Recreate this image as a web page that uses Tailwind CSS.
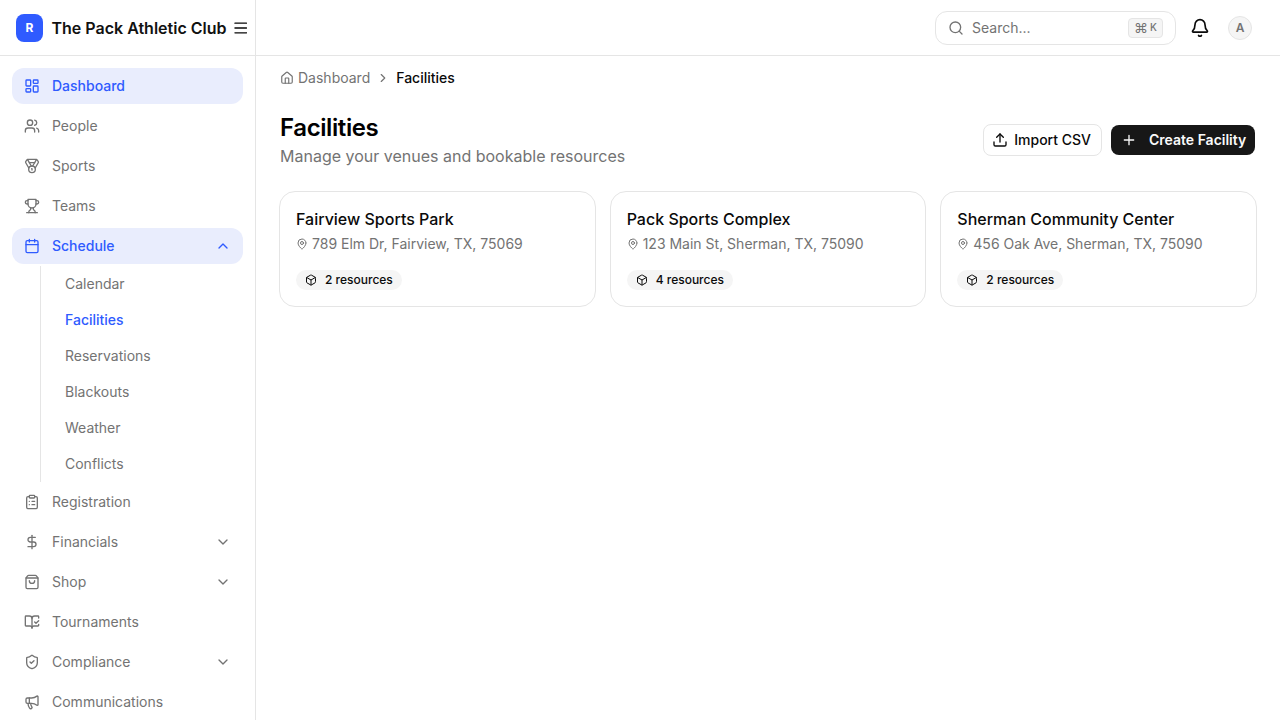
<!DOCTYPE html>
<html lang="en">
<head>
<meta charset="UTF-8">
<title>Facilities</title>
<script src="https://cdn.jsdelivr.net/npm/@tailwindcss/browser@4"></script>
</head>
<body class="h-screen overflow-hidden bg-white font-['Inter',sans-serif] text-[#0a0a0a] antialiased">
<div class="flex h-[720px] overflow-hidden">

  <!-- Sidebar -->
  <aside class="w-[256px] shrink-0 border-r border-[#e5e5e5] flex flex-col">
    <div class="h-[56px] shrink-0 border-b border-[#e5e5e5] flex items-center pl-4 pr-2">
      <div class="w-7 h-7 rounded-lg bg-[#2f5bff] text-white text-xs font-bold flex items-center justify-center">R</div>
      <span class="ml-[8.500px] text-base font-semibold leading-6 whitespace-nowrap text-[#111]">The Pack Athletic Club</span>
      <svg class="ml-[7px] w-[14px] h-[14px]" viewBox="0 0 14 14" fill="none" stroke="#0a0a0a" stroke-width="1.400" stroke-linecap="round"><path d="M1 2h12M1 7h12M1 12h12"/></svg>
    </div>
    <nav class="px-3 pt-3 flex flex-col gap-1 text-sm text-[#737373]">
      <a class="h-9 rounded-xl bg-[#e9edfd] text-[#2f5bff] font-medium flex items-center gap-3 px-3">
        <svg class="w-4 h-4" viewBox="0 0 24 24" fill="none" stroke="currentColor" stroke-width="2" stroke-linecap="round" stroke-linejoin="round"><rect x="3" y="3" width="7" height="9" rx="1"/><rect x="14" y="3" width="7" height="5" rx="1"/><rect x="14" y="12" width="7" height="9" rx="1"/><rect x="3" y="16" width="7" height="5" rx="1"/></svg>
        Dashboard
      </a>
      <a class="h-9 rounded-xl flex items-center gap-3 px-3">
        <svg class="w-4 h-4" viewBox="0 0 24 24" fill="none" stroke="currentColor" stroke-width="2" stroke-linecap="round" stroke-linejoin="round"><circle cx="9" cy="7" r="4"/><path d="M2 21v-2a4 4 0 0 1 4-4h6a4 4 0 0 1 4 4v2"/><path d="M16 3.100a4 4 0 0 1 0 7.800"/><path d="M22 21v-2a4 4 0 0 0-3-3.900"/></svg>
        People
      </a>
      <a class="h-9 rounded-xl flex items-center gap-3 px-3">
        <svg class="w-4 h-4" viewBox="0 0 24 24" fill="none" stroke="currentColor" stroke-width="2" stroke-linecap="round" stroke-linejoin="round"><path d="M7.210 15 2.660 7.140a2 2 0 0 1 .13-2.200L4.400 2.800A2 2 0 0 1 6 2h12a2 2 0 0 1 1.600.8l1.600 2.140a2 2 0 0 1 .14 2.200L16.790 15"/><path d="M11 12 5.120 2.200"/><path d="m13 12 5.880-9.800"/><path d="M8 7h8"/><circle cx="12" cy="17" r="5"/><path d="M12 18v-2h-.5"/></svg>
        Sports
      </a>
      <a class="h-9 rounded-xl flex items-center gap-3 px-3">
        <svg class="w-4 h-4" viewBox="0 0 24 24" fill="none" stroke="currentColor" stroke-width="2" stroke-linecap="round" stroke-linejoin="round"><path d="M6 9H4.500a2.500 2.500 0 0 1 0-5H6"/><path d="M18 9h1.500a2.500 2.500 0 0 0 0-5H18"/><path d="M4 22h16"/><path d="M10 14.700V17c0 .6-.5 1-1 1.200C7.900 18.800 7 20.200 7 22"/><path d="M14 14.700V17c0 .6.500 1 1 1.200 1.100.6 2 2 2 3.800"/><path d="M18 2H6v7a6 6 0 0 0 12 0V2Z"/></svg>
        Teams
      </a>
      <div>
        <a class="h-9 rounded-xl bg-[#e9edfd] text-[#2f5bff] font-medium flex items-center gap-3 px-3">
          <svg class="w-4 h-4" viewBox="0 0 24 24" fill="none" stroke="currentColor" stroke-width="2" stroke-linecap="round" stroke-linejoin="round"><path d="M8 2v4M16 2v4"/><rect x="3" y="4" width="18" height="18" rx="2"/><path d="M3 10h18"/></svg>
          Schedule
          <svg class="ml-auto w-4 h-4" viewBox="0 0 24 24" fill="none" stroke="currentColor" stroke-width="2" stroke-linecap="round" stroke-linejoin="round"><path d="m6 15 6-6 6 6"/></svg>
        </a>
        <div class="ml-7 mt-0.5 -mb-0.5 border-l border-[#e5e5e5] flex flex-col">
          <a class="h-9 flex items-center pl-6">Calendar</a>
          <a class="h-9 flex items-center pl-6 text-[#2f5bff] font-medium">Facilities</a>
          <a class="h-9 flex items-center pl-6">Reservations</a>
          <a class="h-9 flex items-center pl-6">Blackouts</a>
          <a class="h-9 flex items-center pl-6">Weather</a>
          <a class="h-9 flex items-center pl-6">Conflicts</a>
        </div>
      </div>
      <a class="h-9 rounded-xl flex items-center gap-3 px-3">
        <svg class="w-4 h-4" viewBox="0 0 24 24" fill="none" stroke="currentColor" stroke-width="2" stroke-linecap="round" stroke-linejoin="round"><rect x="8" y="2" width="8" height="4" rx="1"/><path d="M16 4h2a2 2 0 0 1 2 2v14a2 2 0 0 1-2 2H6a2 2 0 0 1-2-2V6a2 2 0 0 1 2-2h2"/><path d="M12 11h4M12 16h4M8 11h.01M8 16h.01"/></svg>
        Registration
      </a>
      <a class="h-9 rounded-xl flex items-center gap-3 px-3">
        <svg class="w-4 h-4" viewBox="0 0 24 24" fill="none" stroke="currentColor" stroke-width="2" stroke-linecap="round" stroke-linejoin="round"><path d="M12 2v20"/><path d="M17 5H9.500a3.500 3.500 0 0 0 0 7h5a3.500 3.500 0 0 1 0 7H6"/></svg>
        Financials
        <svg class="ml-auto w-4 h-4" viewBox="0 0 24 24" fill="none" stroke="currentColor" stroke-width="2" stroke-linecap="round" stroke-linejoin="round"><path d="m6 9 6 6 6-6"/></svg>
      </a>
      <a class="h-9 rounded-xl flex items-center gap-3 px-3">
        <svg class="w-4 h-4" viewBox="0 0 24 24" fill="none" stroke="currentColor" stroke-width="2" stroke-linecap="round" stroke-linejoin="round"><path d="M16 10a4 4 0 0 1-8 0"/><path d="M3.103 6.034h17.794"/><path d="M3.400 5.467a2 2 0 0 0-.4 1.200V20a2 2 0 0 0 2 2h14a2 2 0 0 0 2-2V6.667a2 2 0 0 0-.4-1.200l-2-2.667A2 2 0 0 0 17 2H7a2 2 0 0 0-1.600.8z"/></svg>
        Shop
        <svg class="ml-auto w-4 h-4" viewBox="0 0 24 24" fill="none" stroke="currentColor" stroke-width="2" stroke-linecap="round" stroke-linejoin="round"><path d="m6 9 6 6 6-6"/></svg>
      </a>
      <a class="h-9 rounded-xl flex items-center gap-3 px-3">
        <svg class="w-4 h-4" viewBox="0 0 24 24" fill="none" stroke="currentColor" stroke-width="2" stroke-linecap="round" stroke-linejoin="round"><path d="M12 21V7"/><path d="m16 12 2 2 4-4"/><path d="M22 6V4a1 1 0 0 0-1-1h-5a4 4 0 0 0-4 4 4 4 0 0 0-4-4H3a1 1 0 0 0-1 1v13a1 1 0 0 0 1 1h6a3 3 0 0 1 3 3 3 3 0 0 1 3-3h6a1 1 0 0 0 1-1v-1.300"/></svg>
        Tournaments
      </a>
      <a class="h-9 rounded-xl flex items-center gap-3 px-3">
        <svg class="w-4 h-4" viewBox="0 0 24 24" fill="none" stroke="currentColor" stroke-width="2" stroke-linecap="round" stroke-linejoin="round"><path d="M20 13c0 5-3.500 7.500-7.700 9a1 1 0 0 1-.6 0C7.500 20.500 4 18 4 13V6a1 1 0 0 1 1-1c2 0 4.500-1.200 6.200-2.700a1.200 1.200 0 0 1 1.600 0C14.500 3.800 17 5 19 5a1 1 0 0 1 1 1z"/><path d="m9 12 2 2 4-4"/></svg>
        Compliance
        <svg class="ml-auto w-4 h-4" viewBox="0 0 24 24" fill="none" stroke="currentColor" stroke-width="2" stroke-linecap="round" stroke-linejoin="round"><path d="m6 9 6 6 6-6"/></svg>
      </a>
      <a class="h-9 rounded-xl flex items-center gap-3 px-3">
        <svg class="w-4 h-4" viewBox="0 0 24 24" fill="none" stroke="currentColor" stroke-width="2" stroke-linecap="round" stroke-linejoin="round"><path d="M11 6a13 13 0 0 0 8.400-2.800A1 1 0 0 1 21 4v12a1 1 0 0 1-1.600.8A13 13 0 0 0 11 14H5a2 2 0 0 1-2-2V8a2 2 0 0 1 2-2z"/><path d="M6 14a12 12 0 0 0 2.400 7.200 2 2 0 0 0 3.200-2.400A8 8 0 0 1 10 14"/><path d="M8 6v8"/></svg>
        Communications
      </a>
    </nav>
  </aside>

  <!-- Main -->
  <div class="flex-1 min-w-0 flex flex-col">
    <header class="h-[56px] shrink-0 border-b border-[#e5e5e5] flex items-center justify-end pr-7">
      <div class="w-[241px] h-[34px] rounded-xl border border-[#e5e5e5] flex items-center pl-3 pr-3 text-sm text-[#737373]">
        <svg class="w-4 h-4 shrink-0" viewBox="0 0 24 24" fill="none" stroke="currentColor" stroke-width="2" stroke-linecap="round" stroke-linejoin="round"><circle cx="11" cy="11" r="8"/><path d="m21 21-4.300-4.300"/></svg>
        <span class="ml-2">Search...</span>
        <kbd class="ml-auto h-5 w-[35px] rounded bg-[#f5f5f5] border border-[#e5e5e5] flex items-center justify-center gap-[2px] text-[10px] font-medium font-['Inter',sans-serif]"><span class="text-sm font-normal leading-none">⌘</span>K</kbd>
      </div>
      <svg class="ml-[14px] w-5 h-5 text-[#0a0a0a]" viewBox="0 0 24 24" fill="none" stroke="currentColor" stroke-width="2" stroke-linecap="round" stroke-linejoin="round"><path d="M10.300 21a2 2 0 0 0 3.400 0"/><path d="M3.300 15.300A1 1 0 0 0 4 17h16a1 1 0 0 0 .7-1.700C19.400 14 18 12.500 18 8A6 6 0 0 0 6 8c0 4.500-1.400 6-2.700 7.300"/></svg>
      <div class="ml-[18px] w-6 h-6 rounded-full bg-[#f5f5f5] border border-[#e5e5e5] text-[#737373] text-xs font-semibold flex items-center justify-center">A</div>
    </header>

    <main class="flex-1 px-6">
      <div class="h-11 flex items-center text-sm text-[#737373]">
        <svg class="w-[14px] h-[14px] mr-1" viewBox="0 0 24 24" fill="none" stroke="currentColor" stroke-width="2" stroke-linecap="round" stroke-linejoin="round"><path d="M15 21v-8a1 1 0 0 0-1-1h-4a1 1 0 0 0-1 1v8"/><path d="M3 10a2 2 0 0 1 .7-1.500l7-6a2 2 0 0 1 2.600 0l7 6a2 2 0 0 1 .7 1.500v9a2 2 0 0 1-2 2H5a2 2 0 0 1-2-2z"/></svg>
        Dashboard
        <svg class="mx-[6px] w-[14px] h-[14px]" viewBox="0 0 24 24" fill="none" stroke="currentColor" stroke-width="2" stroke-linecap="round" stroke-linejoin="round"><path d="m9 18 6-6-6-6"/></svg>
        <span class="font-medium text-[#0a0a0a]">Facilities</span>
      </div>
      <div class="mt-[12px] flex items-center justify-between">
        <div>
          <h1 class="text-2xl leading-8 font-semibold tracking-[-0.4px] text-black">Facilities</h1>
          <p class="text-base leading-6 text-[#737373]">Manage your venues and bookable resources</p>
        </div>
        <div class="flex items-center gap-[9px] mr-px">
          <button class="h-8 pl-2 pr-[10px] rounded-lg border border-[#e5e5e5] flex items-center gap-[6px] text-sm font-medium">
            <svg class="w-4 h-4" viewBox="0 0 24 24" fill="none" stroke="currentColor" stroke-width="2" stroke-linecap="round" stroke-linejoin="round"><path d="M12 3v12"/><path d="m17 8-5-5-5 5"/><path d="M21 15v4a2 2 0 0 1-2 2H5a2 2 0 0 1-2-2v-4"/></svg>
            Import CSV
          </button>
          <button class="h-[30px] w-[144px] pl-[10px] rounded-lg bg-[#171717] text-[#fafafa] flex items-center gap-3 text-sm font-semibold">
            <svg class="w-4 h-4" viewBox="0 0 24 24" fill="none" stroke="currentColor" stroke-width="2" stroke-linecap="round" stroke-linejoin="round"><path d="M5 12h14M12 5v14"/></svg>
            Create Facility
          </button>
        </div>
      </div>
      <div class="mt-[23px] -mx-px grid grid-cols-3 gap-[14px]">
        <div class="h-[116px] rounded-2xl border border-[#e5e5e5] px-4 pt-[15px]">
          <h3 class="text-base leading-6 font-medium">Fairview Sports Park</h3>
          <p class="flex items-center gap-1 text-sm leading-5 text-[#737373] mt-[3px]">
            <svg class="w-3 h-3" viewBox="0 0 24 24" fill="none" stroke="currentColor" stroke-width="2" stroke-linecap="round" stroke-linejoin="round"><path d="M20 10c0 5-5.500 10.200-7.400 11.800a1 1 0 0 1-1.200 0C9.500 20.200 4 15 4 10a8 8 0 0 1 16 0"/><circle cx="12" cy="10" r="3"/></svg>
            789 Elm Dr, Fairview, TX, 75069
          </p>
          <span class="mt-4 inline-flex h-5 items-center gap-2 rounded-full bg-[#f5f5f5] pl-[9px] pr-[9px] text-xs font-medium">
            <svg class="w-3 h-3" viewBox="0 0 24 24" fill="none" stroke="currentColor" stroke-width="2" stroke-linecap="round" stroke-linejoin="round"><path d="M21 8a2 2 0 0 0-1-1.700l-7-4a2 2 0 0 0-2 0l-7 4A2 2 0 0 0 3 8v8a2 2 0 0 0 1 1.700l7 4a2 2 0 0 0 2 0l7-4a2 2 0 0 0 1-1.700Z"/><path d="m3.300 7 8.700 5 8.700-5M12 22V12"/></svg>
            2 resources
          </span>
        </div>
        <div class="h-[116px] rounded-2xl border border-[#e5e5e5] px-4 pt-[15px]">
          <h3 class="text-base leading-6 font-medium">Pack Sports Complex</h3>
          <p class="flex items-center gap-1 text-sm leading-5 text-[#737373] mt-[3px]">
            <svg class="w-3 h-3" viewBox="0 0 24 24" fill="none" stroke="currentColor" stroke-width="2" stroke-linecap="round" stroke-linejoin="round"><path d="M20 10c0 5-5.500 10.200-7.400 11.800a1 1 0 0 1-1.200 0C9.500 20.200 4 15 4 10a8 8 0 0 1 16 0"/><circle cx="12" cy="10" r="3"/></svg>
            123 Main St, Sherman, TX, 75090
          </p>
          <span class="mt-4 inline-flex h-5 items-center gap-2 rounded-full bg-[#f5f5f5] pl-[9px] pr-[9px] text-xs font-medium">
            <svg class="w-3 h-3" viewBox="0 0 24 24" fill="none" stroke="currentColor" stroke-width="2" stroke-linecap="round" stroke-linejoin="round"><path d="M21 8a2 2 0 0 0-1-1.700l-7-4a2 2 0 0 0-2 0l-7 4A2 2 0 0 0 3 8v8a2 2 0 0 0 1 1.700l7 4a2 2 0 0 0 2 0l7-4a2 2 0 0 0 1-1.700Z"/><path d="m3.300 7 8.700 5 8.700-5M12 22V12"/></svg>
            4 resources
          </span>
        </div>
        <div class="h-[116px] rounded-2xl border border-[#e5e5e5] px-4 pt-[15px]">
          <h3 class="text-base leading-6 font-medium">Sherman Community Center</h3>
          <p class="flex items-center gap-1 text-sm leading-5 text-[#737373] mt-[3px]">
            <svg class="w-3 h-3" viewBox="0 0 24 24" fill="none" stroke="currentColor" stroke-width="2" stroke-linecap="round" stroke-linejoin="round"><path d="M20 10c0 5-5.500 10.200-7.400 11.800a1 1 0 0 1-1.200 0C9.500 20.200 4 15 4 10a8 8 0 0 1 16 0"/><circle cx="12" cy="10" r="3"/></svg>
            456 Oak Ave, Sherman, TX, 75090
          </p>
          <span class="mt-4 inline-flex h-5 items-center gap-2 rounded-full bg-[#f5f5f5] pl-[9px] pr-[9px] text-xs font-medium">
            <svg class="w-3 h-3" viewBox="0 0 24 24" fill="none" stroke="currentColor" stroke-width="2" stroke-linecap="round" stroke-linejoin="round"><path d="M21 8a2 2 0 0 0-1-1.700l-7-4a2 2 0 0 0-2 0l-7 4A2 2 0 0 0 3 8v8a2 2 0 0 0 1 1.700l7 4a2 2 0 0 0 2 0l7-4a2 2 0 0 0 1-1.700Z"/><path d="m3.300 7 8.700 5 8.700-5M12 22V12"/></svg>
            2 resources
          </span>
        </div>
      </div>
    </main>
  </div>
</div>
</body>
</html>
